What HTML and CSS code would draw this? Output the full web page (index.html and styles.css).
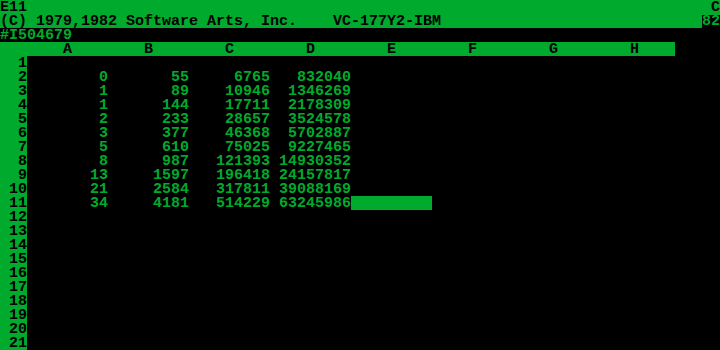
FILE: index.html
```html
<!DOCTYPE html>
<html lang="en">
<head>
    <meta charset="UTF-8">
    <title>VisiCalc</title>
    <link rel="stylesheet" href="styles.css">
</head>
<body>
    <div class="screen">
        <div class="line status">
            <span>E11</span>
            <span>C</span>
        </div>
        <div class="line status">
            <span class="pre">(C) 1979,1982 Software Arts, Inc.    VC-177Y2-IBM</span>
            <span class="inverse">82</span>
        </div>
        <div class="line entry">#I504679</div>
        <div class="line header">
            <span class="corner"></span>
            <span>A</span><span>B</span><span>C</span><span>D</span>
            <span>E</span><span>F</span><span>G</span><span>H</span>
        </div>
        <div id="sheet"></div>
    </div>

    <script>
        const fib = [0, 1];
        for (let i = 2; i < 40; i++) fib.push(fib[i - 1] + fib[i - 2]);

        const sheet = document.getElementById("sheet");
        for (let r = 1; r <= 21; r++) {
            const row = document.createElement("div");
            row.className = "row";
            let html = `<span class="rownum">${r}</span>`;
            for (let c = 0; c < 8; c++) {
                let val = "";
                if (r >= 2 && r <= 11 && c < 4) val = fib[r - 2 + c * 10];
                const cls = (r === 11 && c === 4) ? "cell cursor" : "cell";
                html += `<span class="${cls}">${val}</span>`;
            }
            row.innerHTML = html;
            sheet.appendChild(row);
        }
    </script>
</body>
</html>
```

FILE: styles.css
```css
body {
    margin: 0;
    background-color: #000000;
}
.screen {
    width: 720px;
    height: 350px;
    overflow: hidden;
    font-family: "Liberation Mono", monospace;
    font-size: 15px;
    font-weight: bold;
    color: #00aa2c;
}
.line {
    box-sizing: border-box;
    height: 14px;
    padding-top: 1px;
    line-height: 13px;
}
.pre {
    white-space: pre;
}
.status {
    display: flex;
    justify-content: space-between;
    background-color: #00aa2c;
    color: #000000;
}
.inverse {
    background-color: #000000;
    color: #00aa2c;
}
.header {
    display: grid;
    grid-template-columns: 27px repeat(8, 81px);
    width: 675px;
    background-color: #00aa2c;
    color: #000000;
    text-align: center;
}
.row {
    display: grid;
    grid-template-columns: 27px repeat(8, 81px);
    grid-template-rows: 14px;
}
.row span {
    box-sizing: border-box;
    padding-top: 1px;
    line-height: 13px;
}
.rownum {
    background-color: #00aa2c;
    color: #000000;
    text-align: right;
}
.cell {
    text-align: right;
}
.cursor {
    background-color: #00aa2c;
}
```
